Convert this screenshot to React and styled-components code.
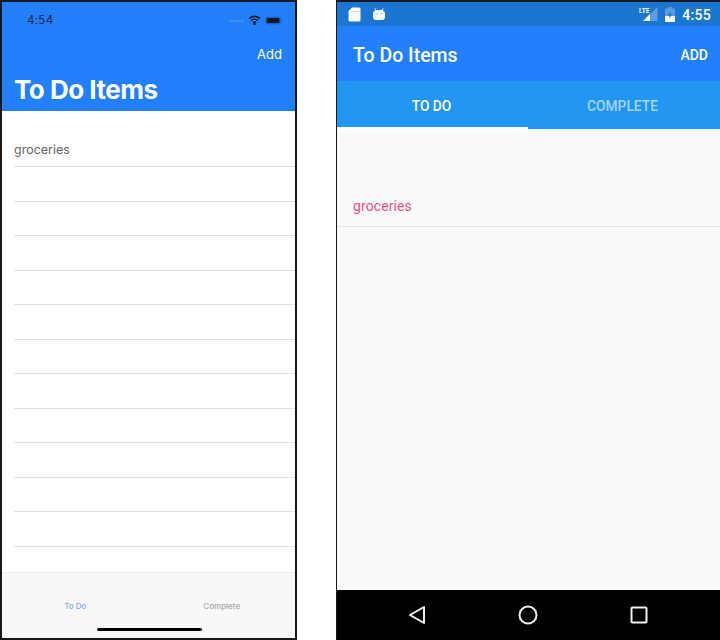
import React from 'react'
import styled, { createGlobalStyle } from 'styled-components'

const Global = createGlobalStyle`
  html, body {
    margin: 0;
    padding: 0;
    background: #fff;
  }
`

const Page = styled.div`
  width: 720px;
  height: 640px;
  display: flex;
  justify-content: space-between;
  align-items: flex-start;
  overflow: hidden;
  font-family: Inter, "Liberation Sans", sans-serif;
`

const IosPhone = styled.div`
  box-sizing: border-box;
  width: 297px;
  height: 640px;
  border: 2px solid #16191c;
  display: flex;
  flex-direction: column;
  background: #fff;
`

const IosHeader = styled.div`
  box-sizing: border-box;
  height: 109px;
  flex: none;
  background: #2280ff;
  color: #fff;
  display: flex;
  flex-direction: column;
`

const IosStatus = styled.div`
  height: 26px;
  margin-top: 5px;
  padding: 0 12px 0 25px;
  display: flex;
  align-items: center;
  justify-content: space-between;
`

const IosTime = styled.span`
  font-size: 11.5px;
  letter-spacing: 0.3px;
  color: #10233f;
`

const IosStatusIcons = styled.div`
  display: flex;
  align-items: center;
  gap: 4px;
`

const AddLink = styled.div`
  margin-top: 11px;
  padding-right: 13px;
  text-align: right;
  font-size: 13px;
  line-height: 20px;
`

const IosTitle = styled.div`
  margin-top: 10px;
  padding-left: 12px;
  font-size: 26px;
  line-height: 32px;
  font-weight: 700;
  letter-spacing: -0.5px;
`

const IosList = styled.div`
  flex: 1;
  padding: 21px 0 0 12px;
  overflow: hidden;
`

const IosRow = styled.div`
  box-sizing: border-box;
  height: ${p => p.$height}px;
  border-bottom: 1px solid #e0e0e0;
  font-size: 12.5px;
  line-height: 36px;
  color: #666;
`

const IosTabBar = styled.div`
  box-sizing: border-box;
  height: 66px;
  flex: none;
  background: #f8f8f8;
  border-top: 1px solid #ececec;
  position: relative;
  display: grid;
  grid-template-columns: 1fr 1fr;
  padding-top: 27px;
`

const IosTab = styled.div`
  text-align: center;
  font-size: 8px;
  line-height: 12px;
  font-weight: 500;
  color: ${p => (p.$active ? '#7fa8f8' : '#a8a8a8')};
`

const HomeBar = styled.div`
  position: absolute;
  left: 95px;
  bottom: 7px;
  width: 105px;
  height: 3px;
  border-radius: 2px;
  background: #000;
`

const AndroidPhone = styled.div`
  box-sizing: border-box;
  width: 384px;
  height: 640px;
  border-top: 2px solid #16191c;
  border-left: 1px solid #16191c;
  display: flex;
  flex-direction: column;
  background: #fafafa;
  font-family: Roboto, "Liberation Sans", sans-serif;
`

const AndroidStatus = styled.div`
  height: 24px;
  flex: none;
  background: #1b76d1;
  color: #fff;
  padding: 0 9px 0 11px;
  display: flex;
  align-items: center;
  justify-content: space-between;
`

const StatusGroup = styled.div`
  display: flex;
  align-items: center;
  gap: ${p => p.$gap}px;
`

const AndroidTime = styled.span`
  font-size: 14px;
  font-weight: 500;
  margin-left: 1px;
  padding-top: 1px;
  letter-spacing: 0.3px;
`

const AppBar = styled.div`
  box-sizing: border-box;
  height: 55px;
  flex: none;
  background: #2280ff;
  color: #fff;
  padding: 3px 12px 0 16px;
  display: flex;
  align-items: center;
  justify-content: space-between;
`

const AppTitle = styled.div`
  font-size: 19.5px;
  font-weight: 500;
`

const AddButton = styled.div`
  font-size: 14px;
  font-weight: 500;
`

const Tabs = styled.div`
  height: 48px;
  flex: none;
  background: #2196f3;
  display: grid;
  grid-template-columns: 191px 1fr;
`

const Tab = styled.div`
  box-sizing: border-box;
  display: flex;
  align-items: center;
  justify-content: center;
  padding: ${p => (p.$active ? '3px 2px 0 0' : '1px 3px 0 0')};
  font-size: 13.8px;
  font-weight: 500;
  color: ${p => (p.$active ? '#fff' : 'rgba(255,255,255,0.6)')};
  border-bottom: ${p => (p.$active ? '2px solid #fff' : 'none')};
`

const AndroidContent = styled.div`
  flex: 1;
  padding-top: 61px;
`

const AndroidRow = styled.div`
  box-sizing: border-box;
  height: 37px;
  padding: 6px 0 0 16px;
  border-bottom: 1px solid #e4e4e4;
  font-size: 14px;
  line-height: 20px;
  color: #ef4f86;
  letter-spacing: 0.1px;
`

const NavBar = styled.div`
  height: 50px;
  flex: none;
  background: #000;
  display: grid;
  grid-template-columns: repeat(3, 111px);
  padding-left: 24px;
  justify-items: center;
  align-items: center;
`

const WifiIcon = () => (
  <svg width="13" height="10" viewBox="0 0 14 11" fill="none" stroke="#0d1b2e" strokeWidth="1.8">
    <path d="M1 4a8.500 8.500 0 0 1 12 0" />
    <path d="M3.200 6.200a5.400 5.400 0 0 1 7.600 0" />
    <path d="M5.400 8.300a2.300 2.300 0 0 1 3.200 0" />
    <circle cx="7" cy="9.600" r=".5" fill="#0d1b2e" />
  </svg>
)

const CellDots = () => (
  <svg width="14" height="6" viewBox="0 0 14 6" fill="#5f8fd4">
    <rect x="0.500" y="3" width="2" height="2" />
    <rect x="4" y="3" width="2" height="2" />
    <rect x="7.500" y="3" width="2" height="2" />
    <rect x="11" y="3" width="2" height="2" />
  </svg>
)

const IosBattery = () => (
  <svg width="18" height="9" viewBox="0 0 20 10">
    <rect x="0.500" y="0.500" width="17" height="9" rx="2.500" fill="#1a62c4" />
    <rect x="2" y="2.200" width="14" height="5.600" rx="1" fill="#0a1626" />
    <rect x="18.200" y="3.500" width="1.200" height="3" rx=".6" fill="#1a62c4" />
  </svg>
)

const SdIcon = () => (
  <svg width="13" height="15" viewBox="0 0 13 15">
    <path d="M4 0.500h7a1.500 1.500 0 0 1 1.500 1.500v11a1.500 1.500 0 0 1-1.500 1.500H2A1.500 1.500 0 0 1 .5 13V4z" fill="#fff" />
    <rect x="3" y="4" width="8" height="1" fill="#cfe0f4" />
  </svg>
)

const RobotIcon = () => (
  <svg width="14" height="14" viewBox="0 0 14 14">
    <path d="M3 1l1.200 2h5.600L11 1l.6.5L10.700 3.400A3 3 0 0 1 13 6.200v4A3 3 0 0 1 10 13H4a3 3 0 0 1-3-2.800v-4A3 3 0 0 1 3.300 3.400L2.400 1.500z" fill="#f2f7fd" />
    <circle cx="5" cy="7" r=".7" fill="#7fb0e8" />
    <circle cx="9" cy="7" r=".7" fill="#7fb0e8" />
  </svg>
)

const LteIcon = () => (
  <svg width="20" height="16" viewBox="0 0 20 16">
    <path d="M18.500 1v14H4z" fill="#5d9be0" />
    <path d="M11 8v7H4z" fill="#fff" />
    <text x="0" y="6.500" fontSize="6.500" fontWeight="700" fill="#fff" fontFamily="Roboto, sans-serif">LTE</text>
  </svg>
)

const AndroidBattery = () => (
  <svg width="10" height="15" viewBox="0 0 10 15">
    <path d="M3 0h4v1.500h3V15H0V1.500h3z" fill="#5d9be0" />
    <path d="M0 9h10v6H0z" fill="#fff" />
    <path d="M5.800 3L2.800 8.500h2L4 12.500l3.200-5.500h-2z" fill="#1b76d1" />
  </svg>
)

const BackIcon = () => (
  <svg width="18" height="20" viewBox="0 0 18 20" fill="none" stroke="#f0f0f0" strokeWidth="2" strokeLinejoin="round">
    <path d="M16 2v16L2 10z" />
  </svg>
)

const HomeIcon = () => (
  <svg width="20" height="20" viewBox="0 0 20 20" fill="none" stroke="#f0f0f0" strokeWidth="2">
    <circle cx="10" cy="10" r="8.500" />
  </svg>
)

const RecentIcon = () => (
  <svg width="18" height="18" viewBox="0 0 18 18" fill="none" stroke="#f0f0f0" strokeWidth="2" strokeLinejoin="round">
    <rect x="1.500" y="1.500" width="15" height="15" rx="1" />
  </svg>
)

const blanks = Array.from({ length: 11 }, (_, i) => i)

export default function App() {
  return (
    <Page>
      <Global />
      <IosPhone>
        <IosHeader>
          <IosStatus>
            <IosTime>4:54</IosTime>
            <IosStatusIcons>
              <CellDots />
              <WifiIcon />
              <IosBattery />
            </IosStatusIcons>
          </IosStatus>
          <AddLink>Add</AddLink>
          <IosTitle>To Do Items</IosTitle>
        </IosHeader>
        <IosList>
          <IosRow $height={35}>groceries</IosRow>
          {blanks.map(i => (
            <IosRow key={i} $height={34.5} />
          ))}
        </IosList>
        <IosTabBar>
          <IosTab $active>To Do</IosTab>
          <IosTab>Complete</IosTab>
          <HomeBar />
        </IosTabBar>
      </IosPhone>

      <AndroidPhone>
        <AndroidStatus>
          <StatusGroup $gap={11}>
            <SdIcon />
            <RobotIcon />
          </StatusGroup>
          <StatusGroup $gap={6}>
            <LteIcon />
            <AndroidBattery />
            <AndroidTime>4:55</AndroidTime>
          </StatusGroup>
        </AndroidStatus>
        <AppBar>
          <AppTitle>To Do Items</AppTitle>
          <AddButton>ADD</AddButton>
        </AppBar>
        <Tabs>
          <Tab $active>TO DO</Tab>
          <Tab>COMPLETE</Tab>
        </Tabs>
        <AndroidContent>
          <AndroidRow>groceries</AndroidRow>
        </AndroidContent>
        <NavBar>
          <BackIcon />
          <HomeIcon />
          <RecentIcon />
        </NavBar>
      </AndroidPhone>
    </Page>
  )
}
